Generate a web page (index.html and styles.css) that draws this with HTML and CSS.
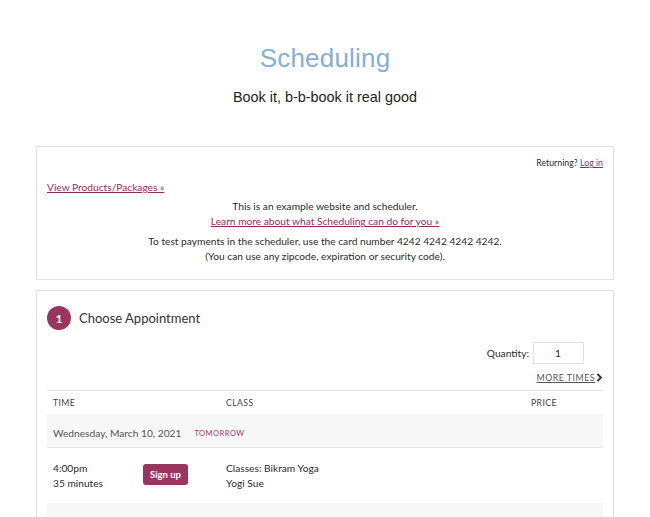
FILE: index.html
```html
<!DOCTYPE html>
<html>
<head>
<meta charset="utf-8">
<link rel="stylesheet" href="styles.css">
</head>
<body>
<header class="hero">
  <h1 class="title">Scheduling</h1>
  <p class="tagline">Book it, b-b-book it real good</p>
</header>
<main class="wrap">
  <section class="panel intro">
    <div class="returning">Returning? <a href="#">Log in</a></div>
    <div class="products"><a href="#">View Products/Packages »</a></div>
    <div class="note">
      <p class="note-a">This is an example website and scheduler.<br><a href="#">Learn more about what Scheduling can do for you »</a></p>
      <p class="note-b">To test payments in the scheduler, use the card number 4242 4242 4242 4242.<br>(You can use any zipcode, expiration or security code).</p>
    </div>
  </section>
  <section class="panel step">
    <div class="step-head"><span class="step-num">1</span><h2 class="step-title">Choose Appointment</h2></div>
    <div class="qty"><label>Quantity:</label><span class="qty-input">1</span></div>
    <div class="more"><a href="#">MORE TIMES</a><svg class="chev" width="7" height="9" viewBox="0 0 7 9"><path d="M1.5 1 L5 4.5 L1.5 8" fill="none" stroke="#333" stroke-width="1.8"/></svg></div>
    <div class="table">
      <div class="row head"><span class="c-time">TIME</span><span class="c-class">CLASS</span><span class="c-price">PRICE</span></div>
      <div class="row day"><span class="day-name">Wednesday, March 10, 2021</span><span class="tomorrow">TOMORROW</span></div>
      <div class="row slot">
        <div class="c-time"><div>4:00pm</div><div>35 minutes</div></div>
        <div class="c-btn"><button class="signup">Sign up</button></div>
        <div class="c-class"><div>Classes: Bikram Yoga</div><div>Yogi Sue</div></div>
        <div class="c-price"></div>
      </div>
      <div class="row day blank"></div>
    </div>
  </section>
</main>
</body>
</html>
```
FILE: styles.css
```css
* { box-sizing: border-box; }
body {
  margin: 0;
  background: #fff;
  font-family: Lato, "Open Sans", sans-serif;
  color: #2b2b2b;
  font-size: 10.2px;
}
a { color: #8e2f58; text-decoration: underline; }
.hero { text-align: center; padding-top: 41px; }
.title {
  margin: 0;
  font-family: "Liberation Sans", Arial, sans-serif;
  font-weight: 400;
  font-size: 26px;
  line-height: 34px;
  color: #86aed6;
  letter-spacing: 0.2px;
}
.tagline {
  margin: 12px 0 0;
  font-family: "Liberation Sans", Arial, sans-serif;
  font-size: 14.4px;
  line-height: 20px;
  color: #222;
}
.wrap { width: 578px; margin: 39px auto 0; }
.panel { border: 1px solid #e3e3e3; background: #fff; }
.intro { padding: 8px 10px 14px; height: 134px; }
.returning { text-align: right; line-height: 16px; font-size: 8.8px; }
.products { margin-top: 8px; line-height: 16px; }
.note { text-align: center; margin-top: 4px; }
.note p { margin: 0; line-height: 15px; }
.note-b { margin-top: 5px !important; }
.step { margin-top: 10px; padding: 15px 10px 0; height: 240px; }
.step-head { display: flex; align-items: center; gap: 8px; }
.step-num {
  width: 24px; height: 24px; border-radius: 50%;
  background: #98365f; color: #fff;
  display: flex; align-items: center; justify-content: center;
  font-size: 12px; font-weight: 700;
}
.step-title { margin: 0; font-weight: 400; font-size: 13px; color: #333; }
.qty { display: flex; justify-content: flex-end; align-items: center; gap: 4px; margin-top: 12px; padding-right: 19px; }
.qty-input {
  width: 51px; height: 22px; border: 1px solid #e3e3e3;
  display: flex; align-items: center; padding-left: 21px;
}
.more { display: flex; justify-content: flex-end; align-items: center; gap: 1px; margin-top: 6px; height: 14px; }
.more a { color: #555; font-size: 8.8px; letter-spacing: 0.5px; }
.table { margin-top: 6px; border-top: 1px solid #e6e6e6; }
.row { display: flex; align-items: center; }
.head { height: 23px; font-size: 8.7px; letter-spacing: 0.4px; color: #444; }
.c-time { width: 96px; padding-left: 6px; }
.c-btn { width: 77px; }
.c-class { width: 305px; padding-left: 6px; }
.head .c-time { width: 173px; }
.c-price { padding-left: 6px; }
.day { height: 34px; background: #f7f7f7; border-bottom: 1px solid #e8e8e8; padding-left: 6px; padding-top: 5px; }
.day-name { color: #555; }
.tomorrow { margin-left: 13px; color: #9b3a60; font-size: 7.5px; letter-spacing: 0.5px; }
.slot { height: 55px; line-height: 15px; }
.signup {
  background: #983660; color: #fff; border: 0; border-radius: 3px;
  font-family: Lato, sans-serif; font-weight: 700; font-size: 9.5px;
  width: 45px; height: 21px; padding: 0; margin-top: -2px;
}
.blank { border-bottom: 0; }
```
